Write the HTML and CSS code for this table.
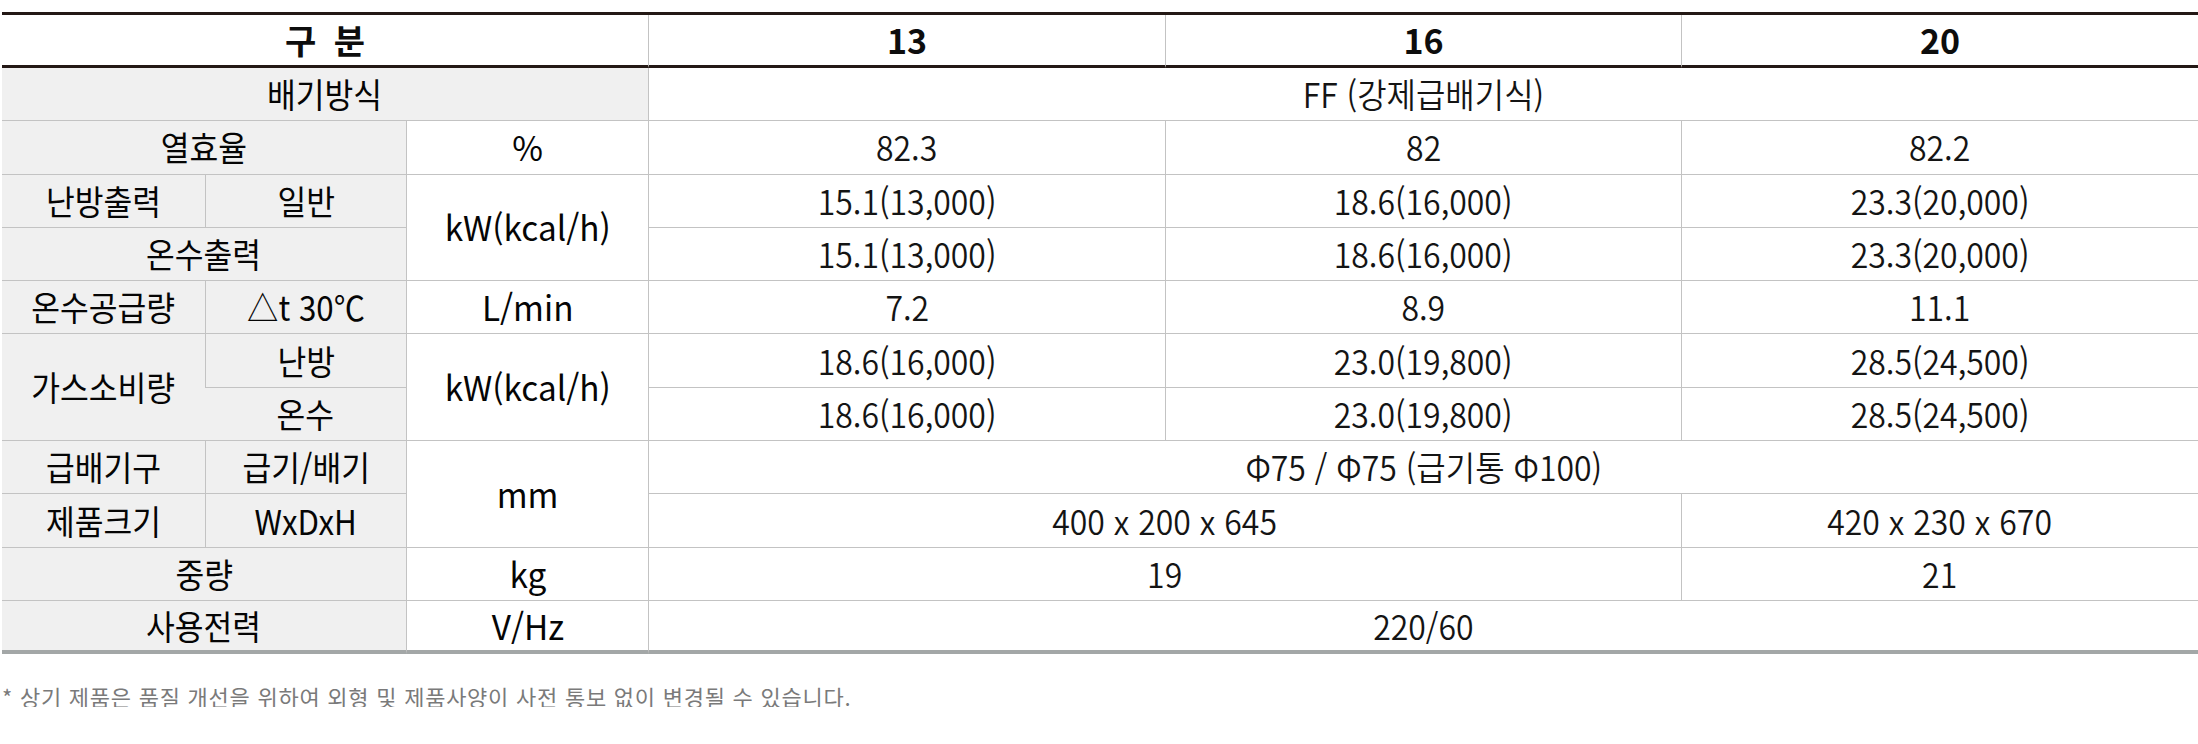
FILE: index.html
```html
<!DOCTYPE html>
<html lang="ko">
<head>
<meta charset="utf-8">
<title>제품 사양</title>
<link rel="stylesheet" href="styles.css">
</head>
<body>
<div class="spec">
  <table class="spec-table">
    <colgroup>
      <col class="c-a"><col class="c-b"><col class="c-c"><col class="c-d"><col class="c-e"><col class="c-f">
    </colgroup>
    <thead>
      <tr>
        <th colspan="3" class="h-first">구 분</th>
        <th>13</th>
        <th>16</th>
        <th>20</th>
      </tr>
    </thead>
    <tbody>
      <tr>
        <td colspan="3" class="lab"><span>배기방식</span></td>
        <td colspan="3" class="val"><span>FF (강제급배기식)</span></td>
      </tr>
      <tr>
        <td colspan="2" class="lab"><span>열효율</span></td>
        <td class="unit"><span>%</span></td>
        <td class="val"><span>82.3</span></td>
        <td class="val"><span>82</span></td>
        <td class="val"><span>82.2</span></td>
      </tr>
      <tr>
        <td class="lab"><span>난방출력</span></td>
        <td class="lab"><span>일반</span></td>
        <td rowspan="2" class="unit"><span>kW(kcal/h)</span></td>
        <td class="val"><span>15.1(13,000)</span></td>
        <td class="val"><span>18.6(16,000)</span></td>
        <td class="val"><span>23.3(20,000)</span></td>
      </tr>
      <tr>
        <td colspan="2" class="lab"><span>온수출력</span></td>
        <td class="val"><span>15.1(13,000)</span></td>
        <td class="val"><span>18.6(16,000)</span></td>
        <td class="val"><span>23.3(20,000)</span></td>
      </tr>
      <tr>
        <td class="lab"><span>온수공급량</span></td>
        <td class="lab"><span>△t 30℃</span></td>
        <td class="unit"><span>L/min</span></td>
        <td class="val"><span>7.2</span></td>
        <td class="val"><span>8.9</span></td>
        <td class="val"><span>11.1</span></td>
      </tr>
      <tr>
        <td rowspan="2" class="lab"><span>가스소비량</span></td>
        <td class="lab"><span>난방</span></td>
        <td rowspan="2" class="unit"><span>kW(kcal/h)</span></td>
        <td class="val"><span>18.6(16,000)</span></td>
        <td class="val"><span>23.0(19,800)</span></td>
        <td class="val"><span>28.5(24,500)</span></td>
      </tr>
      <tr>
        <td class="lab"><span>온수</span></td>
        <td class="val"><span>18.6(16,000)</span></td>
        <td class="val"><span>23.0(19,800)</span></td>
        <td class="val"><span>28.5(24,500)</span></td>
      </tr>
      <tr>
        <td class="lab"><span>급배기구</span></td>
        <td class="lab"><span>급기/배기</span></td>
        <td rowspan="2" class="unit"><span>mm</span></td>
        <td colspan="3" class="val"><span>Φ75 / Φ75 (급기통 Φ100)</span></td>
      </tr>
      <tr>
        <td class="lab"><span>제품크기</span></td>
        <td class="lab"><span>WxDxH</span></td>
        <td colspan="2" class="val"><span>400 x 200 x 645</span></td>
        <td class="val"><span>420 x 230 x 670</span></td>
      </tr>
      <tr>
        <td colspan="2" class="lab"><span>중량</span></td>
        <td class="unit"><span>kg</span></td>
        <td colspan="2" class="val"><span>19</span></td>
        <td class="val"><span>21</span></td>
      </tr>
      <tr class="last">
        <td colspan="2" class="lab"><span>사용전력</span></td>
        <td class="unit"><span>V/Hz</span></td>
        <td colspan="3" class="val"><span>220/60</span></td>
      </tr>
    </tbody>
  </table>
  <p class="note">* 상기 제품은 품질 개선을 위하여 외형 및 제품사양이 사전 통보 없이 변경될 수 있습니다.</p>
</div>
</body>
</html>
```
FILE: styles.css
```css
html, body {
  margin: 0;
  padding: 0;
  background: #ffffff;
}

body {
  font-family: "Noto Sans CJK KR", "Noto Sans", sans-serif;
  color: #111111;
}

.spec {
  padding: 12px 0 0 2px;
}

.spec-table {
  width: 2196px;
  table-layout: fixed;
  border-collapse: separate;
  border-spacing: 0;
  border-top: 3px solid #231815;
}

.c-a { width: 203px; }
.c-b { width: 201px; }
.c-c { width: 242px; }
.c-d { width: 517px; }
.c-e { width: 516px; }
.c-f { width: 517px; }

.spec-table th,
.spec-table td {
  padding: 0;
  text-align: center;
  vertical-align: middle;
  border-bottom: 1px solid #c3c3c3;
  border-left: 1px solid #c3c3c3;
  font-size: 34px;
  line-height: 1;
  white-space: nowrap;
}

.spec-table td span {
  display: inline-block;
}

.spec-table th {
  height: 50px;
  font-weight: 700;
  word-spacing: 8px;
  border-bottom: 3px solid #231815;
  background: #ffffff;
  color: #0d0d0d;
}

.spec-table th.h-first,
.spec-table td:first-child {
  border-left: 0;
}

.spec-table td {
  height: 52.3px;
  font-weight: 400;
}

.spec-table td.lab {
  background: #f0f0f0;
  color: #050505;
  font-weight: 400;
}

.spec-table td.lab span {
  transform: scaleX(0.92);
}

.spec-table td.unit {
  background: #ffffff;
  color: #050505;
}

.spec-table td.unit span {
  transform: scaleX(0.98);
}

.spec-table td.val {
  background: #ffffff;
  color: #141414;
  font-weight: 350;
}

.spec-table td.val span {
  transform: scaleX(0.94);
}

.spec-table tr.last td {
  border-bottom: 4px solid #a3a7a7;
  height: 49.3px;
}

.note {
  margin: 31px 0 0 0;
  font-size: 22px;
  line-height: 1;
  color: #7a7a7a;
  letter-spacing: 0.75px;
}
```
